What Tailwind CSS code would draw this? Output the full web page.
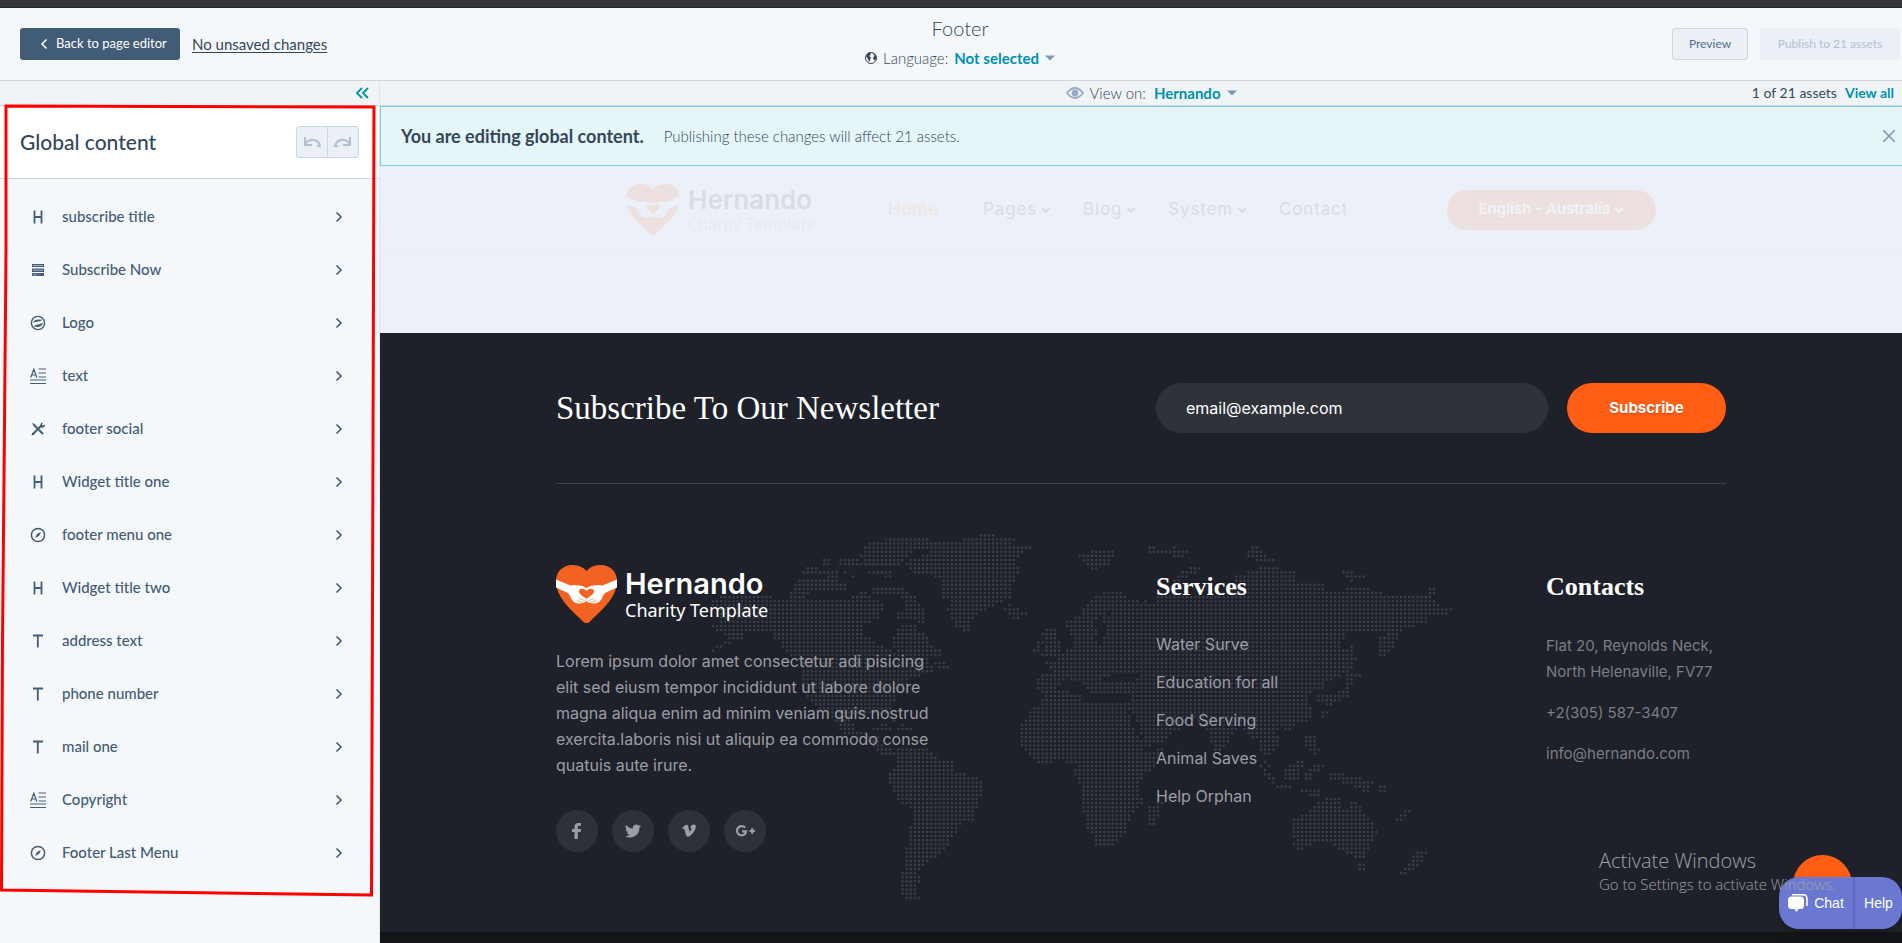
<!doctype html>
<html lang="en">
<head>
  <meta charset="UTF-8">
  <meta name="viewport" content="width=device-width, initial-scale=1.0">
  <title>Footer</title>
  <script src="https://cdn.jsdelivr.net/npm/@tailwindcss/browser@4"></script>
</head>
<body class="h-screen flex flex-col overflow-hidden bg-[#f5f8fa] text-[#33475b] font-['Lato',sans-serif]">
  <!-- shared icons -->
  <svg class="hidden">
    <symbol id="i-right" viewBox="0 0 8 12"><path d="M1.500 1.500L6 6l-4.500 4.500" fill="none" stroke="currentColor" stroke-width="1.600"/></symbol>
    <symbol id="i-down" viewBox="0 0 10 8"><path d="M1.500 2L5 5.700L8.500 2" fill="none" stroke="currentColor" stroke-width="2.400"/></symbol>
    <symbol id="i-caret" viewBox="0 0 10 6"><path d="M0 .5h10L5 5.500z" fill="currentColor"/></symbol>
    <symbol id="i-heading" viewBox="0 0 16 16"><path d="M4.500 1.500v13M11.500 1.500v13M4.500 8h7" fill="none" stroke="currentColor" stroke-width="1.800"/></symbol>
    <symbol id="i-t" viewBox="0 0 16 16"><path d="M3 2.500h10M7.800 2.500V14.500" fill="none" stroke="currentColor" stroke-width="1.800"/></symbol>
    <symbol id="i-form" viewBox="0 0 16 16"><path d="M2 2h12v3H2zM2 6.500h12v3.500H2zM2 11h12v3H2z" fill="currentColor"/><path d="M3 3.500h10M3 8.200h10M3 12.800h4M9 12.500l1-1" stroke="#c3cfdb" stroke-width=".8"/></symbol>
    <symbol id="i-logo" viewBox="0 0 16 16"><circle cx="8" cy="8" r="6.600" fill="none" stroke="currentColor" stroke-width="1.400"/><path d="M3 8C4 4.500 7 4 12.500 4.800 10 7 6 6 3 8zM13.200 7.500C12 11.500 9 12.600 3.600 11.600 6 9 9.500 10 13.200 7.500z" fill="currentColor"/></symbol>
    <symbol id="i-text" viewBox="0 0 16 16"><path d="M.8 9.500L3.800 1.300 6.800 9.500M1.800 7h4M8.500 1h7.500M8.500 5h7.500M8.500 9h7.500M0 12h16M0 15.500h16" fill="none" stroke="currentColor" stroke-width="1.200"/></symbol>
    <symbol id="i-tools" viewBox="0 0 16 16"><path d="M3 13L12 4M4.500 4.500L13 13" stroke="currentColor" stroke-width="2"/><path d="M2 2l3.500 1.200L4 5.700zM10 5l1-3 2-.5-1 2 1 1 2-1-.5 2.500-3 .8zM1.500 14.500l.8-3 2.200 2.200z" fill="currentColor"/></symbol>
    <symbol id="i-compass" viewBox="0 0 16 16"><circle cx="8" cy="8" r="6.600" fill="none" stroke="currentColor" stroke-width="1.500"/><path d="M11 5L9 9l-4 2 2-4z" fill="currentColor"/></symbol>
    <symbol id="i-heart" viewBox="0 0 61 58">
      <path d="M30.500 6C26 .5 20 0 16 0 7 0 0 7 0 15.500 0 34 17 46 27.500 57q3 2.500 6 0C44 46 61 34 61 15.500 61 7 54 0 45 0 41 0 35 .5 30.500 6z" fill="currentColor"/>
      <path d="M0 14.500L14.500 20.500q4-.8 8.500 0 4-.3 7.500 2.700 3.500-3 7.500-2.700 4.500-.8 8.500 0L61 14.500v8L49 28q-2 2-3 5-2 4.500-6.500 5.500-4.500.5-9-2-4.500 2.500-9 2-4.500-1-6.500-5.500-1-3-3-5L0 22.500z" fill="var(--hands)"/>
      <path d="M30.500 33.500c-4-2.500-7.500-4.500-7.500-7.300 0-3.200 5-3.500 7.500-.2 2.500-3.300 7.500-3 7.500.2 0 2.800-3.500 4.800-7.500 7.300z" fill="currentColor"/>
      <path d="M20.500 35.500l6 1.500M22.500 33.500l6 2M40.500 35.500l-6 1.500M38.500 33.500l-6 2M30.500 33v4" stroke="currentColor" stroke-width=".5"/>
    </symbol>
  </svg>

  <div class="h-2 shrink-0 bg-[#35363a] border-b border-[#26272a]"></div>

  <header class="h-[73px] shrink-0 grid grid-cols-[1fr_auto_1fr] items-center pl-5 pr-0.5 border-b border-[#cbd6e2]">
    <div class="flex items-center gap-3">
      <button class="flex items-center gap-2 h-8 w-40 pl-5 rounded-[3px] bg-[#425b76] text-white text-[13px]">
        <svg class="w-2 h-3 rotate-180"><use href="#i-right"/></svg>Back to page editor
      </button>
      <a href="#" class="text-[15px] underline underline-offset-2">No unsaved changes</a>
    </div>
    <div class="flex flex-col items-center pb-1">
      <h1 class="text-xl leading-6 font-light">Footer</h1>
      <div class="mt-2 flex items-center text-[15px] leading-5">
        <svg class="size-3 mr-1.5" viewBox="0 0 12 12"><circle cx="6" cy="6" r="5.500" fill="none" stroke="#33475b"/><path d="M1 4l2-3 3-.5L5.500 3 4 4l2 1.500L5 8 4 10.500 3 7zM7.500 1l3 2 .8 3-1 2.500-1.500-.5L8 5.500 9.500 4z" fill="#33475b"/></svg>
        <span class="font-light">Language:</span>
        <button class="ml-1.5 flex items-center gap-1.5 font-bold text-[#0091ae]">Not selected<svg class="w-2.5 h-1.5 text-[#7c98b6]"><use href="#i-caret"/></svg></button>
      </div>
    </div>
    <div class="flex justify-end gap-3 text-xs">
      <button class="h-8 w-[76px] rounded-[3px] border border-[#cbd6e2] bg-[#eaf0f6] text-[#506e91]">Preview</button>
      <button disabled class="h-8 w-[140px] rounded-[3px] bg-[#eaf0f6] text-[#b0c1d4]">Publish to 21 assets</button>
    </div>
  </header>

  <div class="flex-1 min-h-0 flex">
    <aside class="relative w-[380px] shrink-0 border-r border-[#dfe6ee]">
      <div class="h-[25px] flex items-center justify-end pr-2.5 bg-[#f0f4f7] border-b border-[#cbd6e2]">
        <button aria-label="Collapse panel" class="text-[#0091ae]"><svg class="w-3.5 h-3" viewBox="0 0 14 12" fill="none" stroke="currentColor" stroke-width="1.800"><path d="M7 1L2 6l5 5M13 1L8 6l5 5"/></svg></button>
      </div>
      <div class="h-[73px] flex items-center justify-between px-5 bg-white border-b border-[#cbd6e2]">
        <h2 class="text-[21px] leading-7 font-medium">Global content</h2>
        <div class="flex h-8 rounded-[3px] border border-[#cbd6e2] bg-[#eaf0f6] text-[#b0c1d4]">
          <button aria-label="Undo" class="w-[31px] flex items-center justify-center border-r border-[#cbd6e2]"><svg class="w-[18px] h-3" viewBox="0 0 18 12" fill="none" stroke="currentColor" stroke-width="2"><path d="M2 1v8h7M2 8Q6 3 11 4q5 1 6 6h-3"/></svg></button>
          <button aria-label="Redo" class="w-[30px] flex items-center justify-center"><svg class="w-[18px] h-3 -scale-x-100" viewBox="0 0 18 12" fill="none" stroke="currentColor" stroke-width="2"><path d="M2 1v8h7M2 8Q6 3 11 4q5 1 6 6h-3"/></svg></button>
        </div>
      </div>
      <ul id="modules" class="pt-[11px] text-[15px] text-[#425b76] font-medium"></ul>
      <!-- hand-drawn frame over the panel -->
      <svg class="absolute left-0 top-0 w-[380px] h-[840px] pointer-events-none" viewBox="0 81 380 840"><path d="M6 106L374 107 373 450 371.500 895 1.500 890 2.500 640 4 480 6 250z" fill="none" stroke="#ff0000" stroke-width="3"/></svg>
    </aside>

    <main class="relative flex-1 min-w-0 flex flex-col">
      <div class="h-[25px] shrink-0 grid grid-cols-[1fr_auto_1fr] items-center pl-7 pr-2 bg-[#f0f4f7] border-b border-[#cbd6e2] text-[15px]">
        <span></span>
        <div class="flex items-center">
          <svg class="w-[18px] h-3 mr-1.5 text-[#99acc2]" viewBox="0 0 18 12" fill="none" stroke="currentColor" stroke-width="1.800"><path d="M1 6q8-10 16 0-8 10-16 0z"/><circle cx="9" cy="6" r="2.500" fill="currentColor"/></svg>
          <span class="font-light">View on:</span>
          <button class="ml-2 flex items-center gap-1.5 font-bold text-[#0091ae]">Hernando<svg class="w-2.5 h-1.5 text-[#7c98b6]"><use href="#i-caret"/></svg></button>
        </div>
        <div class="flex justify-end gap-2 text-sm"><span>1 of 21 assets</span><a href="#" class="font-bold text-[#0091ae]">View all</a></div>
      </div>

      <div class="h-[60px] shrink-0 flex items-center pl-5 pr-[7px] border border-r-0 border-[#7fd1de] bg-[#e5f5f8]">
        <strong class="text-lg">You are editing global content.</strong>
        <span class="ml-5 text-[15px] font-light">Publishing these changes will affect 21 assets.</span>
        <button aria-label="Dismiss" class="ml-auto text-[#7c98b6]"><svg class="size-3" viewBox="0 0 12 12" stroke="currentColor" stroke-width="1.500"><path d="M0 0l12 12M12 0L0 12"/></svg></button>
      </div>

      <!-- dimmed page header -->
      <div class="h-[167px] shrink-0 bg-[#ecf1f9] font-['Inter',sans-serif] text-[#d8dde4]">
        <div class="h-[88px] border-b border-[#e7ecf3]">
          <div class="h-full max-w-[1030px] mx-auto flex items-center">
            <a href="#" class="w-[262px] flex items-center gap-2 [--hands:#ecf1f9]">
              <svg class="w-[54px] h-[51px] text-[#ece1df]"><use href="#i-heart"/></svg>
              <span class="flex flex-col">
                <span class="text-[26px] leading-7 font-semibold">Hernando</span>
                <span class="text-base leading-5 font-['Noto_Sans',sans-serif] text-[#e5e9f1]">Charity Template</span>
              </span>
            </a>
            <nav class="flex items-center gap-8 text-[17px] tracking-wider">
              <a href="#" class="mr-3 text-[#f0e2df]">Home</a>
              <a href="#" class="flex items-center gap-1">Pages<svg class="w-2.5 h-2"><use href="#i-down"/></svg></a>
              <a href="#" class="flex items-center gap-1">Blog<svg class="w-2.5 h-2"><use href="#i-down"/></svg></a>
              <a href="#" class="flex items-center gap-1">System<svg class="w-2.5 h-2"><use href="#i-down"/></svg></a>
              <a href="#">Contact</a>
            </nav>
            <button class="ml-auto h-10 w-[209px] rounded-full bg-[#ece1df] flex items-center justify-center gap-1 text-[15px] font-semibold text-[#f0f4fa]">English - Australia<svg class="w-2.5 h-2"><use href="#i-down"/></svg></button>
          </div>
        </div>
      </div>

      <footer class="relative flex-1 bg-[#1e2129] font-['Inter',sans-serif]">
        <svg class="absolute left-[320px] top-[197px] w-[760px] h-[370px]" viewBox="120 30 2280 1110" aria-hidden="true"><path id="map" fill="none" stroke="#3a3d46" stroke-width="8" stroke-linecap="round"/></svg>
        <div class="relative h-[599px] max-w-[1170px] mx-auto">
          <form class="flex items-center justify-between py-[50px] border-b border-[#40434b]">
            <label for="email" class="text-[33px] leading-10 font-['Liberation_Serif',serif] text-white">Subscribe To Our Newsletter</label>
            <div class="flex gap-[19px] w-[570px]">
              <input id="email" type="email" value="email@example.com" class="h-[50px] flex-1 min-w-0 rounded-full bg-[#2f3239] px-[30px] text-base text-white">
              <button type="button" class="h-[50px] w-[159px] rounded-full bg-[#ff5e14] text-[15px] font-bold text-white text-shadow-sm">Subscribe</button>
            </div>
          </form>
          <div class="grid grid-cols-[600fr_390fr_180fr] pt-[81px] text-base text-[#9c9ea4]">
            <div>
              <a href="#" class="flex items-center gap-2 text-white [--hands:#ffffff]">
                <svg class="w-[61px] h-[58px] text-[#f26322]"><use href="#i-heart"/></svg>
                <span class="flex flex-col">
                  <span class="text-[29px] leading-8 font-semibold">Hernando</span>
                  <span class="text-lg leading-5 font-['Noto_Sans',sans-serif]">Charity Template</span>
                </span>
              </a>
              <p class="mt-[25px] w-[390px] whitespace-nowrap leading-[26px]">Lorem ipsum dolor amet consectetur adi pisicing<br>elit sed eiusm tempor incididunt ut labore dolore<br>magna aliqua enim ad minim veniam quis.nostrud<br>exercita.laboris nisi ut aliquip ea commodo conse<br>quatuis aute irure.</p>
              <div class="mt-8 flex gap-3.5">
                <a href="#" aria-label="Facebook" class="size-[42px] rounded-full bg-[#2e3139] flex items-center justify-center"><svg class="size-4" viewBox="0 0 16 16" fill="currentColor"><path d="M5.500 16V9H3V6h2.500V4c0-2.800 1.500-4 4-4h2.500v2.800h-1.800C9.100 2.800 8.800 3.300 8.800 4.200V6H12l-.4 3H8.800v7z"/></svg></a>
                <a href="#" aria-label="Twitter" class="size-[42px] rounded-full bg-[#2e3139] flex items-center justify-center"><svg class="size-4" viewBox="0 0 24 24" fill="currentColor"><path d="M24 4.600a10 10 0 0 1-2.800.8 5 5 0 0 0 2.200-2.700 10 10 0 0 1-3.200 1.200 4.900 4.900 0 0 0-8.400 4.500A14 14 0 0 1 1.700 3.100a4.900 4.900 0 0 0 1.500 6.600 5 5 0 0 1-2.200-.6 4.900 4.900 0 0 0 3.900 4.900 5 5 0 0 1-2.200.1 4.900 4.900 0 0 0 4.600 3.400A10 10 0 0 1 0 19.500 14 14 0 0 0 21.500 7.100 10 10 0 0 0 24 4.600z"/></svg></a>
                <a href="#" aria-label="Vimeo" class="size-[42px] rounded-full bg-[#2e3139] flex items-center justify-center"><svg class="size-3.5" viewBox="0 0 14 14" fill="currentColor"><path d="M0 4l3.500-3C5 .2 6 1 6.400 3c.5 2.500.8 4.600 1.300 4.600S9.500 5.200 9.400 4.300C9.300 3.600 8.600 3.700 8 4 9 1.300 10.500.3 12 .5c2 .2 2.300 2 1.300 4.500C12 8 8.500 12.800 6 12.800c-1.600 0-2.200-2-3-5C2.500 5.800 2.300 4.400 1.700 4.400L.6 5z"/></svg></a>
                <a href="#" aria-label="Google Plus" class="size-[42px] rounded-full bg-[#2e3139] flex items-center justify-center"><svg class="w-[19px] h-3" viewBox="0 0 19 12" fill="none" stroke="currentColor" stroke-width="2.200"><path d="M9.200 2.800A4.600 4.600 0 1 0 10.200 6.400H6M13.500 6h5.500M16.200 3.300v5.400"/></svg></a>
              </div>
            </div>
            <div>
              <h3 class="mt-2 text-[26px] leading-7 font-bold font-['Liberation_Serif',serif] text-white">Services</h3>
              <ul class="mt-6 leading-[38px]">
                <li><a href="#">Water Surve</a></li>
                <li><a href="#">Education for all</a></li>
                <li><a href="#">Food Serving</a></li>
                <li><a href="#">Animal Saves</a></li>
                <li><a href="#">Help Orphan</a></li>
              </ul>
            </div>
            <div class="text-[15px] text-[#7d7e81] whitespace-nowrap leading-[26px]">
              <h3 class="mt-2 text-[26px] leading-7 font-bold font-['Liberation_Serif',serif] text-white">Contacts</h3>
              <p class="mt-8">Flat 20, Reynolds Neck,<br>North Helenaville, FV77</p>
              <p class="mt-[15px]">+2(305) 587-3407</p>
              <p class="mt-[15px]"><a href="#">info@hernando.com</a></p>
            </div>
          </div>
        </div>
        <div class="h-[11px] bg-[#131519]"></div>
      </footer>

      <a href="#" aria-label="Scroll to top" class="absolute right-[50px] bottom-[29px] size-[59px] rounded-full bg-[#ff5e14]"></a>
      <div class="absolute right-0 bottom-3.5 h-[52px] w-[123px] flex rounded-[20px] bg-[#6a78d1] text-white text-sm font-medium font-['Liberation_Sans',sans-serif] shadow-lg">
        <button class="w-[74px] flex items-center justify-center gap-1.5"><svg class="w-5 h-[18px]" viewBox="0 0 20 18"><rect x="0" y="2.500" width="16" height="12.500" rx="3.500" fill="#fff"/><path d="M6 14.500h5L8.500 18z" fill="#fff"/><path d="M4 .8h11q4 0 4 4V12" fill="none" stroke="#fff" stroke-width="1.600"/></svg>Chat</button>
        <button class="flex-1 border-l-2 border-[#5c69bd]">Help</button>
      </div>
      <div class="absolute right-[68px] bottom-12 w-[235px] whitespace-nowrap font-['Open_Sans',sans-serif] font-light text-[#a0a1a3] pointer-events-none">
        <div class="text-xl leading-6">Activate Windows</div>
        <div class="text-[15px] leading-[22px]">Go to Settings to activate Windows.</div>
      </div>
    </main>
  </div>

  <script>
    const modules = [
      ['heading', 'subscribe title'], ['form', 'Subscribe Now'], ['logo', 'Logo'], ['text', 'text'],
      ['tools', 'footer social'], ['heading', 'Widget title one'], ['compass', 'footer menu one'],
      ['heading', 'Widget title two'], ['t', 'address text'], ['t', 'phone number'], ['t', 'mail one'],
      ['text', 'Copyright'], ['compass', 'Footer Last Menu']
    ];
    document.getElementById('modules').innerHTML = modules.map(([icon, name]) => `
      <li><button class="w-full h-[53px] flex items-center pl-[30px] pr-9 text-left">
        <svg class="size-4 mr-4"><use href="#i-${icon}"/></svg>${name}
        <svg class="w-2 h-3 ml-auto"><use href="#i-right"/></svg>
      </button></li>`).join('');

    // dotted world map: outlines are sampled on a regular grid
    const west = new Path2D('M150 245L180 226 328 226 350 236 420 226 440 232 560 236 610 215 640 232 670 250 664 290 640 300 610 320 612 340 640 360 690 390 710 405 700 375 705 320 760 310 775 330 800 340 812 370 840 390 845 410 790 420 815 430 815 455 775 470 745 470 740 500 705 535 700 560 695 590 705 605 685 600 675 585 610 580 575 590 585 630 620 640 660 645 660 670 700 690 665 708 640 680 590 655 540 635 535 610 500 575 465 560 462 545 440 530 425 505 425 440 430 425 370 395 365 370 345 360 335 335 310 330 260 335 250 345 250 360 205 362 190 340 165 332 155 318 180 300 165 275z'
      + 'M140 400L200 360 220 365 160 398zM388 222L415 178 500 178 560 185 560 212 440 220 400 230zM425 160L440 140 475 142 475 150 530 152 530 172 425 165zM488 115h22v22h-22zM540 118L600 118 620 135 600 142 540 138zM545 155L585 160 580 172 550 165z'
      + 'M600 110L625 66 690 54 795 54 815 64 825 90 760 95 740 115 720 138 630 140 610 130zM610 150L695 152 690 172 625 165zM635 200L720 200 770 235 770 250 800 262 790 310 700 290 740 260 715 225 640 222z'
      + 'M735 133L755 112 780 108 815 90 825 64 905 66 910 54 955 54 960 42 1005 42 1005 52 1065 54 1055 75 1115 80 1080 105 1065 120 1078 148 1062 185 1052 235 1025 250 975 272 940 285 930 335 910 335 885 320 870 290 860 265 870 240 848 235 848 180 820 172 800 160 755 158z'
      + 'M1035 268L1045 250 1060 262 1105 280 1065 298 1050 282zM625 632L660 612 710 618 690 632zM700 630L725 612 760 630 735 632zM815 440L830 425 868 430 865 445z'
      + 'M660 695L735 685 800 685 830 715 880 722 880 755 915 760 950 772 978 805 955 840 952 865 942 900 905 905 890 938 865 975 845 1000 825 1015 805 1020 800 1040 770 1055 785 1080 765 1100 770 1125 785 1140 735 1140 722 1125 722 1060 735 1040 735 985 748 975 748 920 760 905 758 870 745 860 710 840 697 800 685 790 685 762 700 745 710 740 708 710 660 708z');
    const east = new Path2D('M330 235L350 228 385 214 430 216 440 232 478 240 478 252 505 240 520 255 530 228 700 228 765 190 765 168 800 155 850 143 895 143 945 155 945 190 1030 190 1035 215 1100 215 1095 202 1155 202 1220 222 1280 230 1340 230 1345 203 1367 203 1360 240 1385 262 1415 266 1400 285 1350 280 1340 308 1300 320 1250 335 1190 332 1140 335 1100 340 1085 375 1080 385 1120 378 1128 415 1115 450 1070 470 1035 490 1030 515 1000 510 985 540 995 570 990 608 970 600 920 635 905 625 890 640 908 670 880 690 875 705 840 700 865 725 885 745 860 745 840 700 840 665 815 650 780 620 765 640 740 670 720 700 705 700 690 665 690 640 670 620 650 600 625 600 600 625 545 665 490 690 550 688 525 740 490 765 475 800 488 850 450 890 440 935 415 965 400 980 345 980 340 945 318 920 318 885 305 870 305 795 282 770 280 745 295 735 255 725 230 725 170 730 135 695 120 670 122 620 150 575 185 545 190 520 170 505 170 475 185 462 235 462 205 440 195 425 230 425 245 402 270 385 285 370 270 340 258 320 260 305 285 292 305 285 310 265z'
      + 'M185 345L200 325 225 330 240 375 240 408 185 408 200 370zM158 395L175 362 192 368 180 395zM293 105L345 92 400 95 400 110 385 135 330 150 320 130zM503 80L525 82 550 95 580 80 635 92 610 112 505 100zM798 105L810 80 835 82 850 105 885 120 830 125zM1083 155L1115 155 1165 168 1110 188zM570 185L600 155 640 142 660 145 640 165 590 190z'
      + 'M1195 408L1195 360 1235 325 1265 330 1240 380 1215 408zM1100 455L1145 465 1120 480 1100 535 1045 558 1010 545 1010 525 1060 525 1095 500zM1020 575L1045 575 1030 595zM973 640L1000 640 1020 690 1005 715 975 680zM825 725L850 735 885 780 880 792 935 795 935 806 885 804zM910 750L965 708 970 740 955 778 915 778zM973 780L985 740 1030 735 1030 750 1000 755 995 785zM945 805L1020 800 1020 828 985 825zM1045 760L1090 760 1180 785 1165 825 1120 800 1050 778zM1195 795h22v24h-22z'
      + 'M935 895L980 880 1010 850 1050 832 1085 835 1090 865 1110 862 1115 838 1140 860 1160 890 1180 910 1192 940 1165 985 1150 1015 1125 1015 1070 985 1055 965 1030 960 990 975 960 990 935 978 950 960 935 940zM1133 1032h22v22h-22zM1305 985L1340 995 1325 1030 1280 1064 1255 1064 1295 1020zM1243 895L1275 870 1292 872 1260 904zM503 860L530 845 550 850 525 915 503 915z');
    const seas = new Path2D('M235 500L260 475 310 490 330 518 450 522 450 545 305 547 300 522 240 512zM370 480L410 457 480 462 480 478 395 482zM345 300L400 270 360 300 385 325 365 370 340 365 350 340zM440 570L455 575 490 655 478 665z');
    const ctx = document.createElement('canvas').getContext('2d');
    const step = 12.36;
    let dots = '';
    for (let row = 0; row < 89; row++) {
      for (let col = 0; col < 184; col++) {
        const x = 121.8 + col * step, y = 46 + row * step;
        const land = ctx.isPointInPath(west, x, y) || ctx.isPointInPath(east, x - 960, y);
        if (land && !ctx.isPointInPath(seas, x - 960, y)) dots += `M${x.toFixed(1)} ${y.toFixed(1)}h0`;
      }
    }
    document.getElementById('map').setAttribute('d', dots);
  </script>
</body>
</html>
